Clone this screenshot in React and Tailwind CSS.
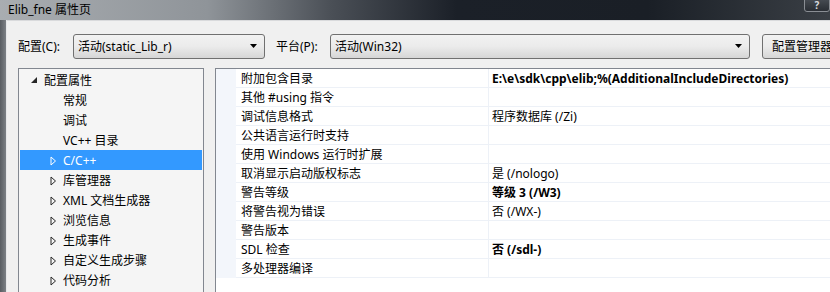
import React from 'react';

const FONT = { fontFamily: '"Noto Sans", "Noto Sans CJK SC", sans-serif' };

const treeItems = [
  { label: '配置属性', level: 0, arrow: 'open' },
  { label: '常规', level: 1 },
  { label: '调试', level: 1 },
  { label: 'VC++ 目录', level: 1 },
  { label: 'C/C++', level: 1, arrow: 'closed', selected: true },
  { label: '库管理器', level: 1, arrow: 'closed' },
  { label: 'XML 文档生成器', level: 1, arrow: 'closed' },
  { label: '浏览信息', level: 1, arrow: 'closed' },
  { label: '生成事件', level: 1, arrow: 'closed' },
  { label: '自定义生成步骤', level: 1, arrow: 'closed' },
  { label: '代码分析', level: 1, arrow: 'closed' },
];

const props = [
  { name: '附加包含目录', value: 'E:\\e\\sdk\\cpp\\elib;%(AdditionalIncludeDirectories)', bold: true },
  { name: '其他 #using 指令', value: '' },
  { name: '调试信息格式', value: '程序数据库 (/Zi)' },
  { name: '公共语言运行时支持', value: '' },
  { name: '使用 Windows 运行时扩展', value: '' },
  { name: '取消显示启动版权标志', value: '是 (/nologo)' },
  { name: '警告等级', value: '等级 3 (/W3)', bold: true },
  { name: '将警告视为错误', value: '否 (/WX-)' },
  { name: '警告版本', value: '' },
  { name: 'SDL 检查', value: '否 (/sdl-)', bold: true },
  { name: '多处理器编译', value: '' },
];

const DownArrow = () => (
  <svg width="8" height="5" viewBox="0 0 8 5">
    <path d="M0 0 H7 L3.5 4 Z" fill="#000" />
  </svg>
);

const Combo = ({ text, className = '' }) => (
  <div
    className={`h-[25px] shrink-0 flex items-center justify-between pl-[4px] pr-[6px] rounded-[3px] border border-[#707070] bg-gradient-to-b from-[#f2f2f2] via-[#ebebeb] to-[#d6d6d6] ${className}`}
  >
    <span className="text-[12px] text-black">{text}</span>
    <DownArrow />
  </div>
);

const TreeArrow = ({ type, selected }) => {
  if (type === 'open') {
    return (
      <svg width="7" height="7" viewBox="0 0 7 7">
        <path d="M6 0 V6 H0 Z" fill="#262626" />
      </svg>
    );
  }
  return (
    <svg width="7" height="10" viewBox="0 0 7 10">
      <path d="M1 1 L5.5 5 L1 9 Z" fill="none" stroke={selected ? '#fff' : '#262626'} strokeWidth="1" />
    </svg>
  );
};

export default function App() {
  return (
    <div className="w-[830px] h-[292px] overflow-hidden flex flex-col bg-[#f0f0f0]" style={FONT}>
      {/* Title bar */}
      <div className="h-[20px] shrink-0 relative flex items-center pl-[8px] bg-[linear-gradient(to_right,#a9adb1_0%,#8f9499_25%,#4a4f56_40%,#1b2028_55%,#1a1f26_78%,#3a3f45_100%)]">
        <span className="text-[12px] text-black leading-none">Elib_fne 属性页</span>
        <div className="absolute right-[0px] top-[-3px] w-[26px] h-[15px] rounded-[3px] border border-[#8a8e94] bg-gradient-to-b from-[#4a4f56] to-[#2a2e34] flex items-end justify-center">
          <span className="text-[10px] leading-none text-[#d8dade] font-bold pb-[1px]">?</span>
        </div>
      </div>

      <div className="flex flex-1 min-h-0">
        {/* Left frame */}
        <div className="w-[6px] shrink-0 bg-gradient-to-r from-[#595d62] to-[#7d8186]" />
        <div className="w-[1px] shrink-0 bg-[#e6e7e9]" />

        {/* Client */}
        <div className="flex-1 min-w-0 overflow-hidden flex flex-col bg-[#f0f0f0] border-t border-[#d9dadc] pt-[13px] pl-[11px]">
          <div className="flex items-center h-[25px]">
            <span className="text-[12px] text-black w-[55px] shrink-0">配置(C):</span>
            <Combo text="活动(static_Lib_r)" className="w-[192px]" />
            <span className="text-[12px] text-black ml-[11px] w-[54px] shrink-0">平台(P):</span>
            <Combo text="活动(Win32)" className="w-[420px]" />
            <div className="ml-[12px] h-[25px] w-[90px] shrink-0 rounded-[3px] border border-[#707070] bg-gradient-to-b from-[#f2f2f2] via-[#ebebeb] to-[#d6d6d6] flex items-center pl-[9px]">
              <span className="text-[12px] text-black whitespace-nowrap">配置管理器</span>
            </div>
          </div>

          <div className="flex mt-[9px] flex-1 min-h-0">
            {/* Tree */}
            <div className="w-[186px] shrink-0 border-t border-l border-r border-[#828790] bg-[#f5f5f5] pt-[1px] px-[1px]">
              {treeItems.map((it) => (
                <div
                  key={it.label}
                  className={`h-[20px] flex items-center pt-[1px] ${it.selected ? 'bg-[#3399ff] text-white' : 'text-black'}`}
                >
                  <div className={`${it.level === 0 ? 'w-[24px]' : 'w-[43px]'} flex justify-end pr-[6px] shrink-0`}>
                    {it.arrow && <TreeArrow type={it.arrow} selected={it.selected} />}
                  </div>
                  <span className="text-[12px] whitespace-nowrap">{it.label}</span>
                </div>
              ))}
            </div>

            {/* Property grid */}
            <div className="ml-[11px] flex-1 min-w-0 border-t border-l border-[#828790] bg-white">
              {props.map((p) => (
                <div key={p.name} className="h-[19px] flex">
                  <div className="w-[20px] shrink-0 bg-[#f3f6fb]" />
                  <div className="w-[253px] shrink-0 border-b border-r border-[#edf1f7] flex items-center pl-[5px] pt-[1px]">
                    <span className="text-[12px] text-black whitespace-nowrap">{p.name}</span>
                  </div>
                  <div className="flex-1 border-b border-[#edf1f7] flex items-center pl-[3px] pt-[1px]">
                    <span className={`text-[12px] text-black whitespace-nowrap ${p.bold ? 'font-bold' : ''}`}>{p.value}</span>
                  </div>
                </div>
              ))}
            </div>
          </div>
        </div>
      </div>
    </div>
  );
}
